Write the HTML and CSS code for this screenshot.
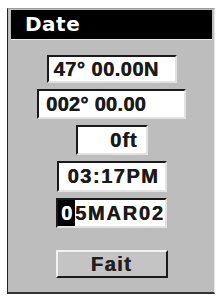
FILE: index.html
```html
<!DOCTYPE html>
<html>
<head lang="en">
    <meta charset="UTF-8">
    <title>Date</title>
    <link rel="stylesheet" href="styles.css">
</head>
<body>
<div class="window">
    <div class="title">Date</div>
    <div class="content">
        <div class="field lat">47° 00.00N</div>
        <div class="field lon">002° 00.00</div>
        <div class="field alt">0ft</div>
        <div class="field time">03:17PM</div>
        <div class="field date"><span class="cursor">0</span>5MAR02</div>
        <div class="button">Fait</div>
    </div>
</div>
</body>
</html>
```

FILE: styles.css
```css
*{
    margin: 0;
    padding: 0;
    box-sizing: border-box;
}
html,body{
    background: #fff;
    font-family: "Liberation Sans", Arial, sans-serif;
}
.window{
    width: 208px;
    height: 286px;
    margin: 8px 0 0 7px;
    border-left: 1px solid #222;
    border-top: 1px solid #9a9a9a;
    border-right: 1px solid #e4e4e4;
    border-bottom: 2px solid #333;
    background: #bdbdbd;
    padding: 1px 2px 0 3px;
    display: flex;
    flex-direction: column;
}
.title{
    height: 30px;
    background: #000;
    border-bottom: 1px solid #e8e8e8;
    color: #fff;
    font-family: "DejaVu Sans", sans-serif;
    font-weight: bold;
    font-size: 20px;
    letter-spacing: 0.5px;
    line-height: 29px;
    padding-left: 14px;
}
.content{
    display: flex;
    flex-direction: column;
    align-items: center;
    gap: 6px;
    padding-top: 15px;
}
.field{
    display: flex;
    align-items: center;
    height: 30px;
    background: #fff;
    border-top: 2px solid #1a1a1a;
    border-left: 2px solid #1a1a1a;
    border-right: 2px solid #e2e2e2;
    border-bottom: 2px solid #e2e2e2;
    color: #1a1a1a;
    font-weight: bold;
    font-size: 20px;
    letter-spacing: 1px;
    text-shadow: 0.5px 0 0 #1a1a1a;
}
.lat{
    width: 130px;
    height: 28px;
    padding-left: 5px;
    letter-spacing: 0.5px;
}
.lon{
    width: 149px;
    padding-left: 7px;
    letter-spacing: 0.3px;
}
.alt{
    width: 72px;
    justify-content: flex-end;
    padding-right: 8px;
}
.time{
    width: 110px;
    height: 31px;
    padding-left: 9px;
    letter-spacing: 1.5px;
}
.date{
    width: 111px;
    align-items: stretch;
    letter-spacing: 1.8px;
}
.date,
.cursor{
    line-height: 26px;
}
.cursor{
    background: #000;
    color: #fff;
    text-shadow: 0.5px 0 0 #fff;
    padding: 0 1px 0 3px;
}
.button{
    width: 112px;
    height: 28px;
    margin-top: 16px;
    background: #c4c4c4;
    border-top: 2px solid #f2f2f2;
    border-left: 2px solid #f2f2f2;
    border-right: 2px solid #1a1a1a;
    border-bottom: 2px solid #1a1a1a;
    color: #1f1f1f;
    font-weight: bold;
    font-size: 20px;
    letter-spacing: 1.5px;
    text-shadow: 0.5px 0 0 #1f1f1f;
    text-align: center;
    line-height: 24px;
}
```
